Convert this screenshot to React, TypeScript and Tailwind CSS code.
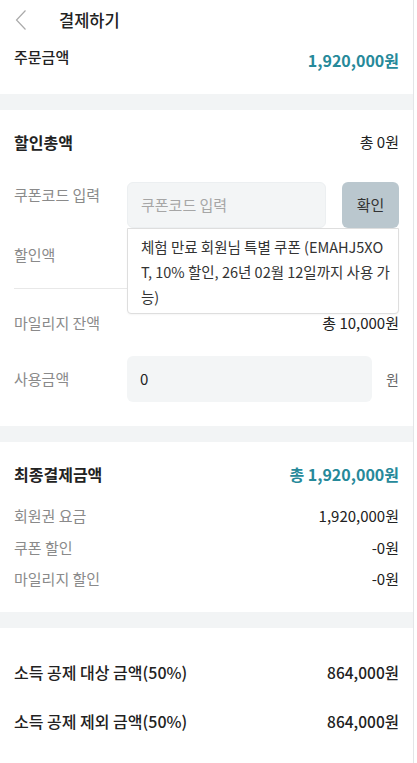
import React from "react";

const teal = "text-[#26899a]";

const Band = () => <div className="h-4 bg-[#f2f4f5]" />;

const Row = ({ label, value }: { label: string; value: string }) => (
  <div className="flex items-center justify-between leading-[20px]">
    <span className="text-[15px] text-[#8a8a8a]">{label}</span>
    <span className="text-[15px] text-[#222]">{value}</span>
  </div>
);

export default function App() {
  return (
    <div
      className="w-[414px] min-h-[763px] bg-white border-r border-[#e3e5e7] text-[#222]"
      style={{ fontFamily: '"Noto Sans CJK KR", "Noto Sans", sans-serif' }}
    >
      {/* header */}
      <div className="flex h-10 items-center px-[14px]">
        <svg width="14" height="22" viewBox="0 0 14 22" className="shrink-0">
          <path d="M11.5 1.5 L2.5 11 L11.5 20.5" fill="none" stroke="#aaaaaa" strokeWidth="1.2" />
        </svg>
        <span className="ml-[31px] text-[16.5px] font-medium">결제하기</span>
      </div>

      {/* order amount */}
      <div className="flex h-[54px] items-start justify-between px-[14px] pt-[7px]">
        <span className="text-[15px] font-medium leading-[20px]">주문금액</span>
        <span className={`text-[16px] font-bold leading-[26px] ${teal}`}>1,920,000원</span>
      </div>

      <Band />

      {/* discount */}
      <div className="px-[14px] pt-[22px] pb-[24px]">
        <div className="flex items-center justify-between leading-[20px]">
          <span className="text-[16px] font-bold">할인총액</span>
          <span className="text-[15px]">총 0원</span>
        </div>

        <div className="relative mt-[30px] flex items-start">
          <span className="w-[113px] shrink-0 pt-[3px] text-[15px] leading-[20px] text-[#8a8a8a]">
            쿠폰코드 입력
          </span>
          <div className="flex h-[46px] w-[199px] items-center rounded-md border border-[#eceff1] bg-[#f3f5f6] px-[13px] text-[15px] text-[#a6a6a6]">
            쿠폰코드 입력
          </div>
          <div className="ml-4 flex h-[46px] w-[57px] items-center justify-center rounded-md bg-[#bac7ce] text-[15px] text-[#333]">
            확인
          </div>
          <div className="absolute left-[113px] top-[46px] z-10 w-[272px] rounded-b border border-[#dedede] bg-white pl-[13px] pr-[4px] pt-[5px] pb-[4px] text-[14.5px] leading-[25px] text-[#333] whitespace-nowrap shadow-[0_1px_2px_rgba(0,0,0,0.04)]">
            체험 만료 회원님 특별 쿠폰 (EMAHJ5XO
            <br />
            T, 10% 할인, 26년 02월 12일까지 사용 가
            <br />
            능)
          </div>
        </div>

        <div className="mt-[17px] border-b border-[#e8e8e8] pb-[23px] text-[15px] leading-[20px] text-[#8a8a8a]">
          할인액
        </div>

        <div className="mt-[24px]">
          <Row label="마일리지 잔액" value="총 10,000원" />
        </div>

        <div className="mt-[23px] flex items-center">
          <span className="w-[113px] shrink-0 text-[15px] text-[#8a8a8a]">사용금액</span>
          <div className="flex h-[46px] w-[245px] items-center rounded-md bg-[#f3f5f6] px-[13px] text-[15px] text-[#222]">
            0
          </div>
          <span className="ml-auto text-[14px] text-[#666]">원</span>
        </div>
      </div>

      <Band />

      {/* final */}
      <div className="px-[14px] pt-[20px] pb-[23px]">
        <div className="flex items-center justify-between leading-[24px]">
          <span className="text-[16px] font-bold">최종결제금액</span>
          <span className={`text-[16px] font-bold ${teal}`}>총 1,920,000원</span>
        </div>
        <div className="mt-[20px] flex flex-col gap-[11.5px]">
          <Row label="회원권 요금" value="1,920,000원" />
          <Row label="쿠폰 할인" value="-0원" />
          <Row label="마일리지 할인" value="-0원" />
        </div>
      </div>

      <Band />

      {/* deduction */}
      <div className="flex flex-col gap-[27px] px-[14px] pt-[33px] pb-[30px]">
        <div className="flex items-center justify-between leading-[22px]">
          <span className="text-[16px] font-medium">소득 공제 대상 금액(50%)</span>
          <span className="text-[15.5px] font-medium">864,000원</span>
        </div>
        <div className="flex items-center justify-between leading-[22px]">
          <span className="text-[16px] font-medium">소득 공제 제외 금액(50%)</span>
          <span className="text-[15.5px] font-medium">864,000원</span>
        </div>
      </div>
    </div>
  );
}
